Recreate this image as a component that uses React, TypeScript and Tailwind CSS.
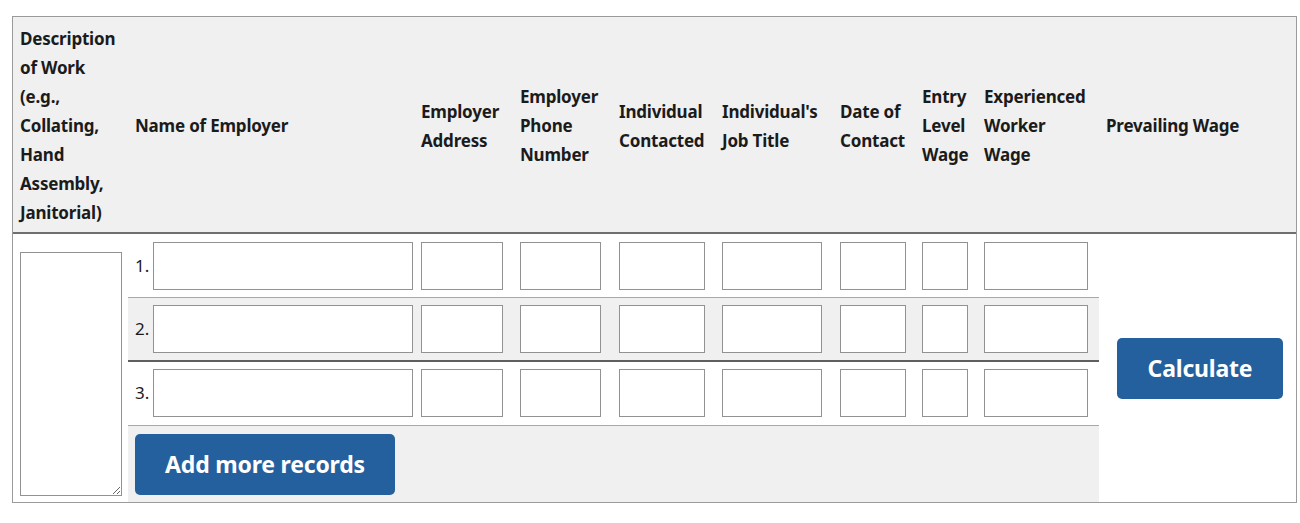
const font = { fontFamily: "'Noto Sans', Lato, sans-serif" };

type Col = { key: string; lines: string[]; width: string; input: string };

const cols: Col[] = [
  { key: "name", lines: ["Name of Employer"], width: "w-[286px]", input: "w-[260px]" },
  { key: "address", lines: ["Employer", "Address"], width: "w-[99px]", input: "w-[82px]" },
  { key: "phone", lines: ["Employer", "Phone", "Number"], width: "w-[99px]", input: "w-[81px]" },
  { key: "contacted", lines: ["Individual", "Contacted"], width: "w-[103px]", input: "w-[86px]" },
  { key: "title", lines: ["Individual's", "Job Title"], width: "w-[118px]", input: "w-[100px]" },
  { key: "date", lines: ["Date of", "Contact"], width: "w-[82px]", input: "w-[66px]" },
  { key: "entry", lines: ["Entry", "Level", "Wage"], width: "w-[62px]", input: "w-[46px]" },
  { key: "experienced", lines: ["Experienced", "Worker", "Wage"], width: "w-[122px]", input: "w-[104px]" },
];

function HeadCell({ lines, width }: { lines: string[]; width: string }) {
  return (
    <div className={`${width} shrink-0 flex items-center pl-[7px]`}>
      <div>
        {lines.map((l) => (
          <div key={l} className="whitespace-nowrap leading-[29px] tracking-[-0.2px]">
            {l}
          </div>
        ))}
      </div>
    </div>
  );
}

function RecordRow({ n, className }: { n: number; className: string }) {
  return (
    <div className={`flex items-start ${className}`}>
      {cols.map((c, i) => (
        <div key={c.key} className={`${c.width} shrink-0 pl-[7px] flex items-center`}>
          {i === 0 && (
            <span className="w-[18px] text-[17px] text-[#1b1b1b]">{n}.</span>
          )}
          <input
            type="text"
            className={`${c.input} h-[48px] bg-white border border-[#929292] outline-none`}
          />
        </div>
      ))}
    </div>
  );
}

export default function App() {
  return (
    <div className="bg-white w-[1300px] h-[523px] pt-[16px] pl-[12px]" style={font}>
      <div className="w-[1285px] border border-[#9a9a9a] text-[#1b1b1b]">
        <div className="flex bg-[#f0f0f0] h-[217px] pt-[8px] pb-[6px] border-b-2 border-[#6f6f6f] font-bold text-[17px]">
          <HeadCell
            lines={["Description", "of Work", "(e.g.,", "Collating,", "Hand", "Assembly,", "Janitorial)"]}
            width="w-[115px]"
          />
          {cols.map((c) => (
            <HeadCell key={c.key} lines={c.lines} width={c.width} />
          ))}
          <HeadCell lines={["Prevailing Wage"]} width="w-[197px]" />
        </div>

        <div className="flex h-[268px]">
          <div className="w-[115px] shrink-0 pl-[7px] pt-[18px] bg-white">
            <textarea className="w-[102px] h-[244px] border border-[#929292] bg-white outline-none resize" />
          </div>

          <div className="w-[971px] shrink-0 flex flex-col">
            <RecordRow n={1} className="h-[64px] pt-[8px] bg-white border-b border-[#a8a8a8]" />
            <RecordRow n={2} className="h-[64px] pt-[7px] bg-[#f0f0f0] border-b-2 border-[#5f5f5f]" />
            <RecordRow n={3} className="h-[64px] pt-[7px] bg-white border-b border-[#a8a8a8]" />
            <div className="flex-1 bg-[#f0f0f0] pl-[7px] pt-[8px]">
              <button className="w-[260px] h-[61px] rounded-[5px] bg-[#24609e] text-white font-bold text-[23px] tracking-[-0.2px]">
                Add more records
              </button>
            </div>
          </div>

          <div className="flex-1 flex items-center pl-[18px] bg-white">
            <button className="w-[166px] h-[61px] rounded-[5px] bg-[#24609e] text-white font-bold text-[23px] tracking-[-0.2px]">
              Calculate
            </button>
          </div>
        </div>
      </div>
    </div>
  );
}
